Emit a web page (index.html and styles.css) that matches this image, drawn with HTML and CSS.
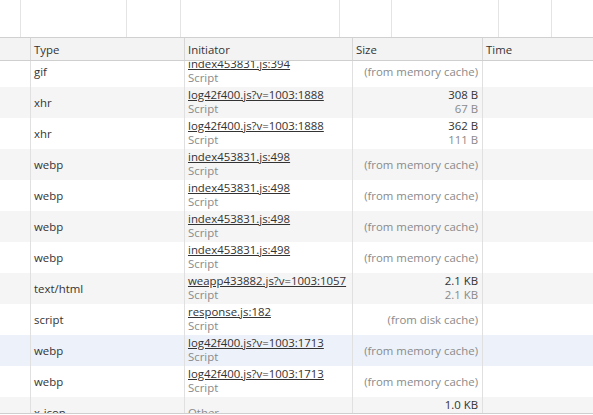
FILE: index.html
```html
<!DOCTYPE html>
<html>
<head>
<meta charset="utf-8">
<link rel="stylesheet" href="styles.css">
</head>
<body>
<div class="overview">
  <div class="seg s1"></div>
  <div class="seg s2"></div>
  <div class="seg s3"></div>
  <div class="seg s4"></div>
  <div class="seg s5"></div>
  <div class="seg s6"></div>
  <div class="seg s7"></div>
  <div class="seg s8"></div>
</div>
<div class="header row">
  <div class="cell"></div>
  <div class="cell">Type</div>
  <div class="cell">Initiator</div>
  <div class="cell">Size</div>
  <div class="cell last">Time</div>
</div>
<div class="body">
  <div class="rows">
    <div class="row">
      <div class="cell"></div>
      <div class="cell mid">gif</div>
      <div class="cell two"><span class="link">index453831.js:394</span><span class="sub">Script</span></div>
      <div class="cell mid right sub">(from memory cache)</div>
      <div class="cell last"></div>
    </div>
    <div class="row alt">
      <div class="cell"></div>
      <div class="cell mid">xhr</div>
      <div class="cell two"><span class="link">log42f400.js?v=1003:1888</span><span class="sub">Script</span></div>
      <div class="cell two right"><span>308 B</span><span class="sub">67 B</span></div>
      <div class="cell last"></div>
    </div>
    <div class="row">
      <div class="cell"></div>
      <div class="cell mid">xhr</div>
      <div class="cell two"><span class="link">log42f400.js?v=1003:1888</span><span class="sub">Script</span></div>
      <div class="cell two right"><span>362 B</span><span class="sub">111 B</span></div>
      <div class="cell last"></div>
    </div>
    <div class="row alt">
      <div class="cell"></div>
      <div class="cell mid">webp</div>
      <div class="cell two"><span class="link">index453831.js:498</span><span class="sub">Script</span></div>
      <div class="cell mid right sub">(from memory cache)</div>
      <div class="cell last"></div>
    </div>
    <div class="row">
      <div class="cell"></div>
      <div class="cell mid">webp</div>
      <div class="cell two"><span class="link">index453831.js:498</span><span class="sub">Script</span></div>
      <div class="cell mid right sub">(from memory cache)</div>
      <div class="cell last"></div>
    </div>
    <div class="row alt">
      <div class="cell"></div>
      <div class="cell mid">webp</div>
      <div class="cell two"><span class="link">index453831.js:498</span><span class="sub">Script</span></div>
      <div class="cell mid right sub">(from memory cache)</div>
      <div class="cell last"></div>
    </div>
    <div class="row">
      <div class="cell"></div>
      <div class="cell mid">webp</div>
      <div class="cell two"><span class="link">index453831.js:498</span><span class="sub">Script</span></div>
      <div class="cell mid right sub">(from memory cache)</div>
      <div class="cell last"></div>
    </div>
    <div class="row alt">
      <div class="cell"></div>
      <div class="cell mid">text/html</div>
      <div class="cell two"><span class="link">weapp433882.js?v=1003:1057</span><span class="sub">Script</span></div>
      <div class="cell two right"><span>2.1 KB</span><span class="sub">2.1 KB</span></div>
      <div class="cell last"></div>
    </div>
    <div class="row">
      <div class="cell"></div>
      <div class="cell mid">script</div>
      <div class="cell two"><span class="link">response.js:182</span><span class="sub">Script</span></div>
      <div class="cell mid right sub">(from disk cache)</div>
      <div class="cell last"></div>
    </div>
    <div class="row sel">
      <div class="cell"></div>
      <div class="cell mid">webp</div>
      <div class="cell two"><span class="link">log42f400.js?v=1003:1713</span><span class="sub">Script</span></div>
      <div class="cell mid right sub">(from memory cache)</div>
      <div class="cell last"></div>
    </div>
    <div class="row">
      <div class="cell"></div>
      <div class="cell mid">webp</div>
      <div class="cell two"><span class="link">log42f400.js?v=1003:1713</span><span class="sub">Script</span></div>
      <div class="cell mid right sub">(from memory cache)</div>
      <div class="cell last"></div>
    </div>
    <div class="row alt">
      <div class="cell"></div>
      <div class="cell mid">x-icon</div>
      <div class="cell mid sub">Other</div>
      <div class="cell two right"><span>1.0 KB</span><span class="sub">1.0 KB</span></div>
      <div class="cell last"></div>
    </div>
  </div>
</div>
</body>
</html>
```
FILE: styles.css
```css
html, body {
  margin: 0;
  padding: 0;
  background: #ffffff;
}
body {
  width: 593px;
  height: 415px;
  overflow: hidden;
  font-family: "Open Sans", "Noto Sans", sans-serif;
  font-size: 11.4px;
  color: #333333;
}
.overview {
  display: flex;
  height: 37px;
  border-bottom: 1px solid #d0d0d0;
}
.seg {
  border-right: 1px solid #e4e4e4;
  flex: none;
}
.s1 { width: 20px; }
.s2 { width: 105px; }
.s3 { width: 53px; }
.s4 { width: 158px; }
.s5 { width: 51px; }
.s6 { width: 106px; }
.s7 { width: 52px; }
.s8 { flex: 1; border-right: none; }

.row {
  display: grid;
  grid-template-columns: 31px 154px 168px 130px 1fr;
  height: 31px;
}
.header {
  height: 22px;
  background: #f3f3f3;
  border-bottom: 1px solid #cfcfcf;
}
.header .cell {
  display: flex;
  align-items: center;
  padding-left: 3px;
  border-right-color: #d6d6d6;
  color: #333333;
}
.cell {
  border-right: 1px solid #e0e0e0;
  overflow: hidden;
  white-space: nowrap;
  min-width: 0;
  padding: 0 4px 0 3px;
}
.cell.last {
  border-right: none;
}
.mid {
  display: flex;
  align-items: center;
}
.mid.right {
  justify-content: flex-end;
}
.two {
  display: flex;
  flex-direction: column;
  line-height: 14px;
  padding-top: 1px;
}
.two.right {
  align-items: flex-end;
}
.link {
  text-decoration: underline;
  color: #333333;
}
.sub {
  color: #8a8a8a;
}
.body {
  height: 352px;
  overflow: hidden;
  border-bottom: 1px solid #cfcfcf;
}
.rows {
  margin-top: -5px;
}
.alt {
  background: #f5f5f5;
}
.sel {
  background: #edf2fa;
}
```
